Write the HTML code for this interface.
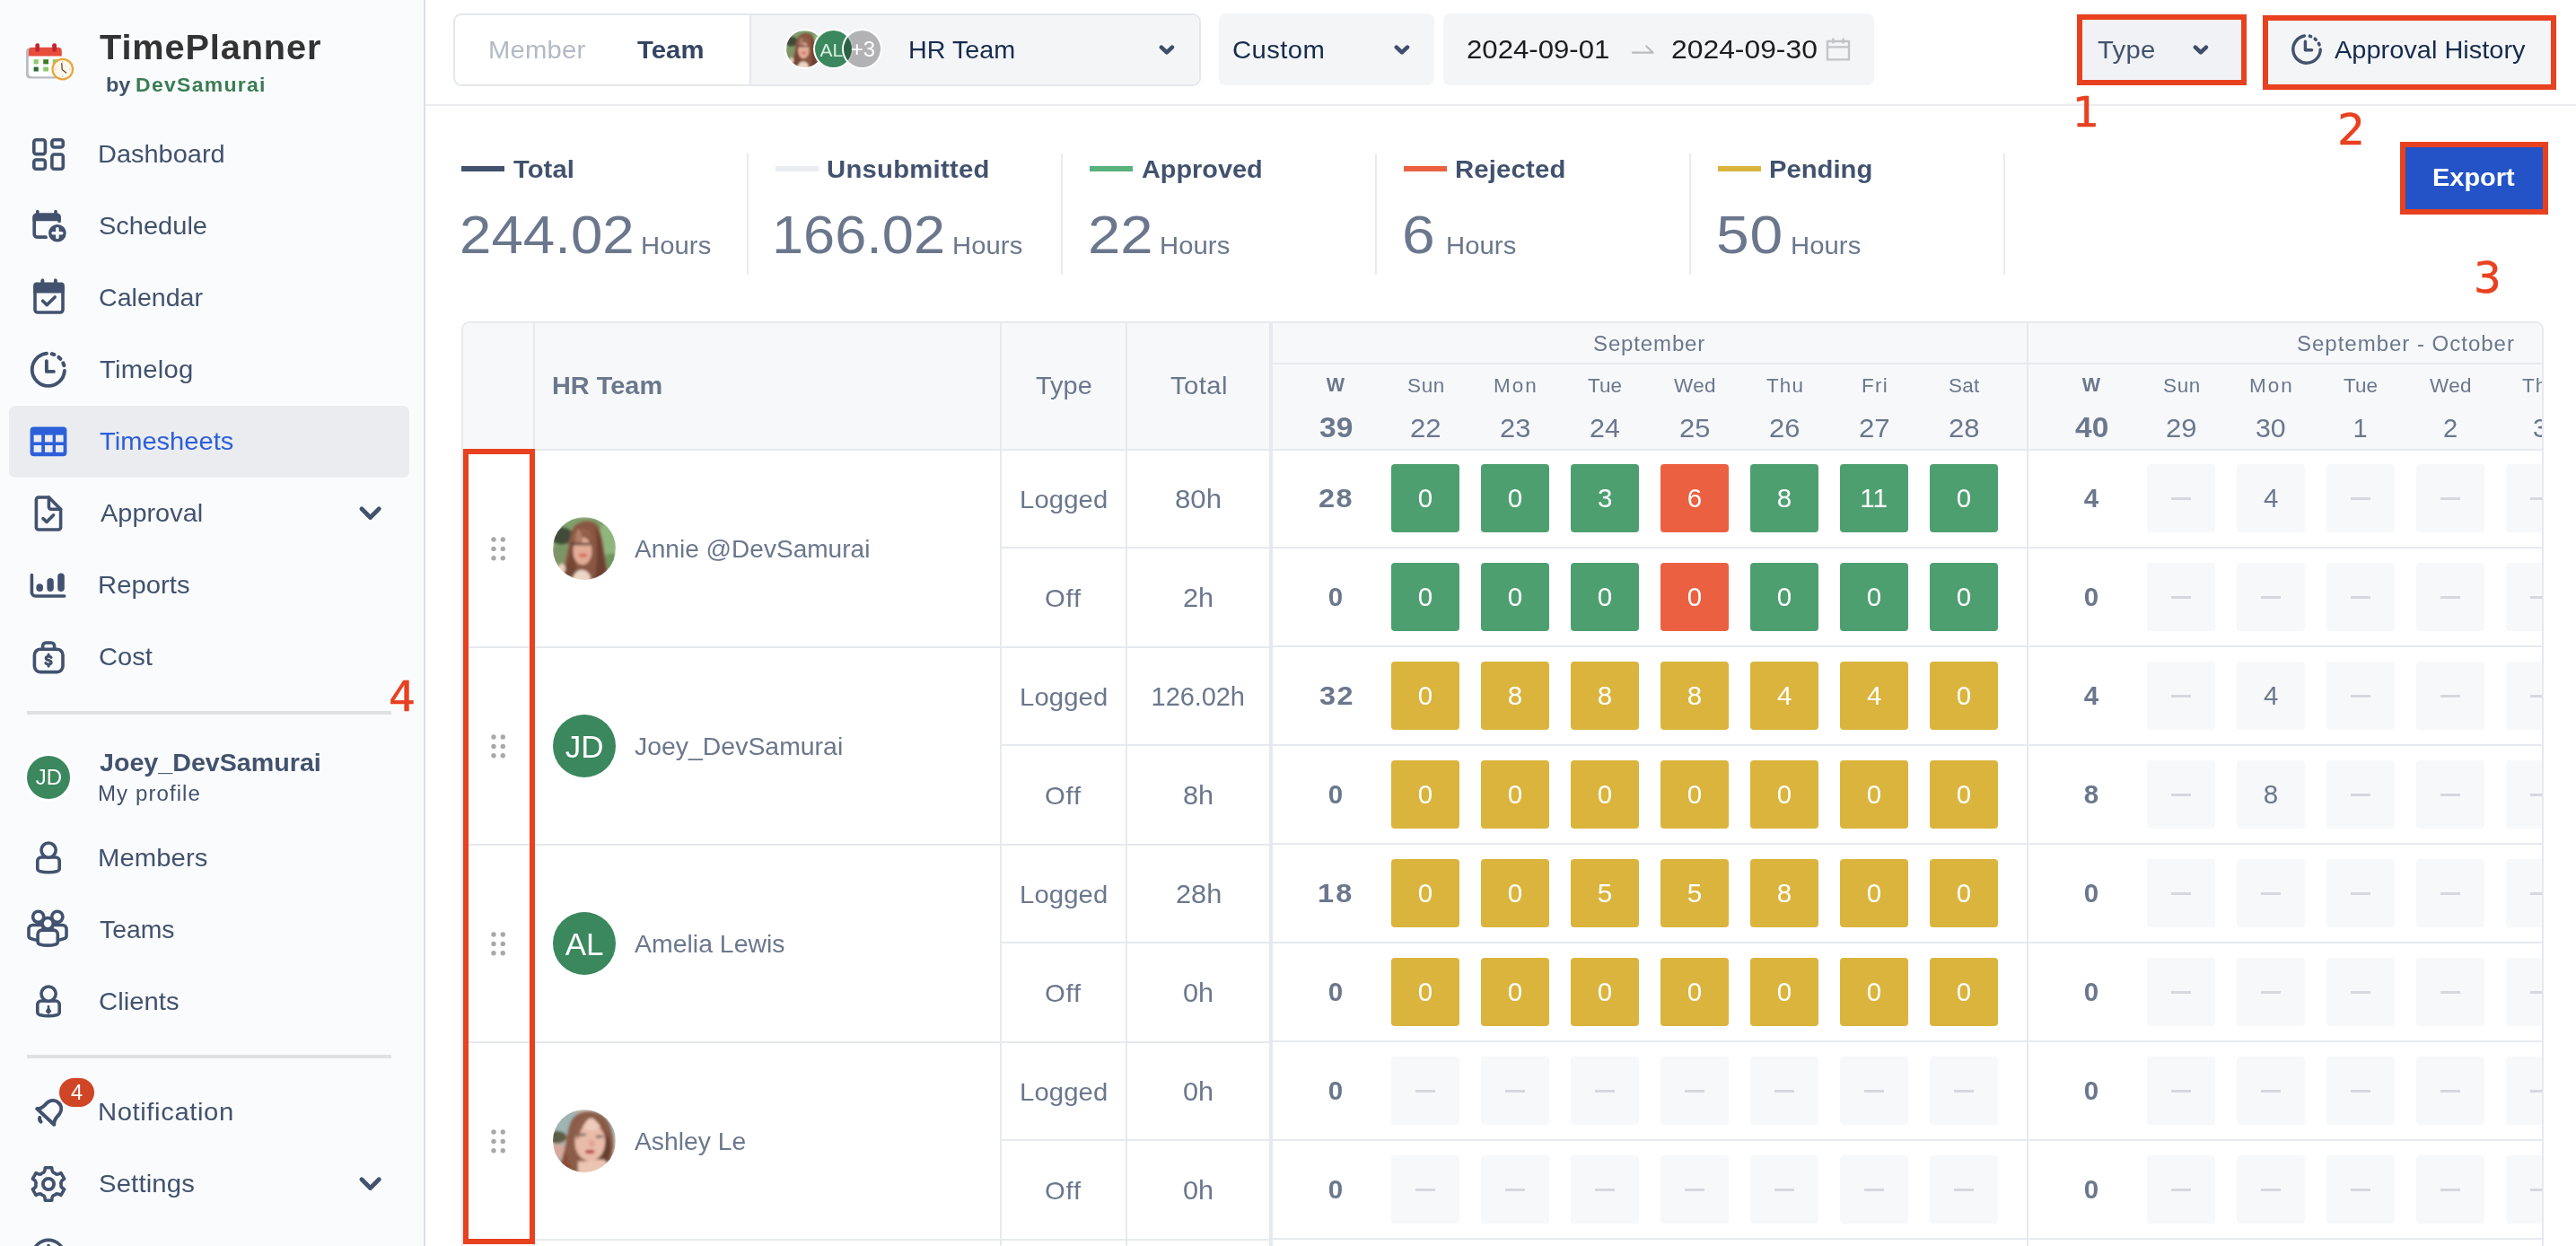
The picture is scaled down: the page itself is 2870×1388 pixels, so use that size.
<!DOCTYPE html>
<html lang="en"><head><meta charset="utf-8"><title>TimePlanner - Timesheets</title>
<style>
html,body{margin:0;padding:0;}
#root{position:absolute;left:0;top:0;width:2870px;height:1388px;overflow:hidden;will-change:transform;}
body{width:2870px;height:1388px;overflow:hidden;position:relative;background:#fff;font-family:"Liberation Sans",Arial,sans-serif;}
.b{position:absolute;box-sizing:border-box;}
.t{position:absolute;white-space:nowrap;line-height:1;transform-origin:0 50%;}
.tile{position:absolute;width:76px;height:76px;border-radius:4px;}
</style></head><body><div id="root">
<div class="b" style="left:0px;top:0px;width:474px;height:1388px;background:#fafbfc;border-right:2px solid #dcdfe4;"></div>
<div class="b" style="left:474px;top:116px;width:2396px;height:2px;background:#ebedf1;"></div>
<div class="b" style="left:10px;top:452px;width:446px;height:80px;background:#ebecf0;border-radius:7px;"></div>
<div class="t" style="left:110.6px;top:33.8px;font-size:38px;color:#333333;font-weight:700;letter-spacing:0.84px;transform:scaleX(1.045);">TimePlanner</div>
<div class="t" style="left:118.2px;top:84.2px;font-size:22px;color:#42526e;font-weight:700;transform:scaleX(1.067);">by</div>
<div class="t" style="left:150.5px;top:84.2px;font-size:22px;color:#3a7d54;font-weight:700;letter-spacing:1.23px;transform:scaleX(1.045);">DevSamurai</div>
<div class="t" style="left:109.2px;top:158.2px;font-size:28px;color:#42526e;transform:scaleX(1.034);">Dashboard</div>
<div class="t" style="left:110.2px;top:238.2px;font-size:28px;color:#42526e;transform:scaleX(1.036);">Schedule</div>
<div class="t" style="left:110.1px;top:318.2px;font-size:28px;color:#42526e;transform:scaleX(1.021);">Calendar</div>
<div class="t" style="left:110.9px;top:398.2px;font-size:28px;color:#42526e;letter-spacing:0.21px;transform:scaleX(1.045);">Timelog</div>
<div class="t" style="left:110.9px;top:478.2px;font-size:28px;color:#2c5fda;transform:scaleX(1.039);">Timesheets</div>
<div class="t" style="left:111.5px;top:558.2px;font-size:28px;color:#42526e;transform:scaleX(1.033);">Approval</div>
<div class="t" style="left:109.2px;top:638.2px;font-size:28px;color:#42526e;letter-spacing:0.02px;transform:scaleX(1.045);">Reports</div>
<div class="t" style="left:110.0px;top:718.2px;font-size:28px;color:#42526e;transform:scaleX(1.039);">Cost</div>
<div class="b" style="left:30px;top:792px;width:406px;height:4px;background:#dfe1e5;"></div>
<div class="t" style="left:110.6px;top:835.7px;font-size:28px;color:#42526e;font-weight:700;transform:scaleX(1.023);">Joey_DevSamurai</div>
<div class="t" style="left:109.1px;top:873.0px;font-size:23px;color:#42526e;letter-spacing:1.03px;transform:scaleX(1.045);">My profile</div>
<div class="t" style="left:109.2px;top:942.2px;font-size:28px;color:#42526e;letter-spacing:0.06px;transform:scaleX(1.045);">Members</div>
<div class="t" style="left:110.9px;top:1022.2px;font-size:28px;color:#42526e;transform:scaleX(1.013);">Teams</div>
<div class="t" style="left:110.0px;top:1102.2px;font-size:28px;color:#42526e;letter-spacing:0.02px;transform:scaleX(1.045);">Clients</div>
<div class="t" style="left:109.2px;top:1225.2px;font-size:28px;color:#42526e;letter-spacing:0.56px;transform:scaleX(1.045);">Notification</div>
<div class="t" style="left:110.2px;top:1305.2px;font-size:28px;color:#42526e;letter-spacing:0.15px;transform:scaleX(1.045);">Settings</div>
<div class="b" style="left:30px;top:1175px;width:406px;height:4px;background:#dfe1e5;"></div>
<div class="b" style="left:505px;top:15px;width:833px;height:81px;background:#ffffff;border:2px solid #e4e7ec;border-radius:9px;overflow:hidden;"><div class="b" style="left:328px;top:0;width:503px;height:77px;background:#f4f5f7;border-left:2px solid #e4e7ec;"></div></div>
<div class="t" style="left:544.2px;top:41.8px;font-size:28px;color:#b3bac5;letter-spacing:0.17px;transform:scaleX(1.045);">Member</div>
<div class="t" style="left:710.2px;top:41.8px;font-size:28px;color:#344563;font-weight:700;letter-spacing:0.07px;transform:scaleX(1.045);">Team</div>
<div class="t" style="left:1011.7px;top:41.8px;font-size:28px;color:#172b4d;transform:scaleX(1.026);">HR Team</div>
<div class="b" style="left:1358px;top:15px;width:240px;height:80px;background:#f4f5f7;border-radius:7px;"></div>
<div class="t" style="left:1372.5px;top:41.8px;font-size:28px;color:#172b4d;letter-spacing:0.40px;transform:scaleX(1.045);">Custom</div>
<div class="b" style="left:1608px;top:15px;width:480px;height:80px;background:#f4f5f7;border-radius:7px;"></div>
<div class="t" style="left:1634.0px;top:40.5px;font-size:29px;color:#1d1d1f;transform:scaleX(1.074);">2024-09-01</div>
<div class="t" style="left:1861.9px;top:40.5px;font-size:29px;color:#1d1d1f;transform:scaleX(1.098);">2024-09-30</div>
<div class="b" style="left:2313.5px;top:16px;width:189px;height:79px;background:#f1f2f5;border:6px solid #e8411f;"></div>
<div class="t" style="left:2337.4px;top:41.8px;font-size:28px;color:#42526e;letter-spacing:0.29px;transform:scaleX(1.045);">Type</div>
<div class="b" style="left:2521px;top:16.6px;width:326.5px;height:83.3px;background:#f4f5f7;border:6px solid #e8411f;"></div>
<div class="t" style="left:2601.0px;top:41.8px;font-size:28px;color:#172b4d;transform:scaleX(1.035);">Approval History</div>
<div class="b" style="left:2674.4px;top:158px;width:164.6px;height:81px;background:#2353c7;border:6px solid #e8411f;"></div>
<div class="t" style="left:2709.6px;top:183.8px;font-size:28px;color:#ffffff;font-weight:700;transform:scaleX(1.034);">Export</div>
<div class="t" style="left:2309.0px;top:101.2px;font-size:47px;color:#e8411f;font-family:'DejaVu Sans',sans-serif;-webkit-text-stroke:0.5px #e8411f;">1</div>
<div class="t" style="left:2604.3px;top:120.3px;font-size:48.3px;color:#e8411f;font-family:'DejaVu Sans',sans-serif;-webkit-text-stroke:0.5px #e8411f;">2</div>
<div class="t" style="left:2756.0px;top:284.6px;font-size:48.5px;color:#e8411f;font-family:'DejaVu Sans',sans-serif;-webkit-text-stroke:0.5px #e8411f;">3</div>
<div class="t" style="left:433.0px;top:752.2px;font-size:47px;color:#e8411f;font-family:'DejaVu Sans',sans-serif;-webkit-text-stroke:0.5px #e8411f;">4</div>
<div class="b" style="left:514px;top:185px;width:48px;height:6px;background:#42526e;"></div>
<div class="t" style="left:572.2px;top:174.8px;font-size:28px;color:#42526e;font-weight:700;letter-spacing:0.02px;transform:scaleX(1.045);">Total</div>
<div class="t" style="left:511.8px;top:232.1px;font-size:60px;color:#6b778c;transform:scaleX(1.061);">244.02</div>
<div class="t" style="left:714.2px;top:259.9px;font-size:28px;color:#6b778c;letter-spacing:0.06px;transform:scaleX(1.045);">Hours</div>
<div class="b" style="left:832px;top:171px;width:2px;height:135px;background:#e9ebef;"></div>
<div class="b" style="left:864px;top:185px;width:48px;height:6px;background:#e9ecf0;"></div>
<div class="t" style="left:920.7px;top:174.8px;font-size:28px;color:#42526e;font-weight:700;letter-spacing:0.25px;transform:scaleX(1.045);">Unsubmitted</div>
<div class="t" style="left:860.3px;top:232.1px;font-size:60px;color:#6b778c;transform:scaleX(1.052);">166.02</div>
<div class="t" style="left:1060.9px;top:259.9px;font-size:28px;color:#6b778c;letter-spacing:0.06px;transform:scaleX(1.045);">Hours</div>
<div class="b" style="left:1182px;top:171px;width:2px;height:135px;background:#e9ebef;"></div>
<div class="b" style="left:1214px;top:185px;width:48px;height:6px;background:#57b27c;"></div>
<div class="t" style="left:1271.8px;top:174.8px;font-size:28px;color:#42526e;font-weight:700;transform:scaleX(1.030);">Approved</div>
<div class="t" style="left:1211.7px;top:232.1px;font-size:60px;color:#6b778c;transform:scaleX(1.089);">22</div>
<div class="t" style="left:1291.7px;top:259.9px;font-size:28px;color:#6b778c;letter-spacing:0.06px;transform:scaleX(1.045);">Hours</div>
<div class="b" style="left:1532px;top:171px;width:2px;height:135px;background:#e9ebef;"></div>
<div class="b" style="left:1564px;top:185px;width:48px;height:6px;background:#eb6040;"></div>
<div class="t" style="left:1620.6px;top:174.8px;font-size:28px;color:#42526e;font-weight:700;letter-spacing:0.18px;transform:scaleX(1.045);">Rejected</div>
<div class="t" style="left:1561.7px;top:232.1px;font-size:60px;color:#6b778c;transform:scaleX(1.100);">6</div>
<div class="t" style="left:1610.7px;top:259.9px;font-size:28px;color:#6b778c;letter-spacing:0.06px;transform:scaleX(1.045);">Hours</div>
<div class="b" style="left:1882px;top:171px;width:2px;height:135px;background:#e9ebef;"></div>
<div class="b" style="left:1914px;top:185px;width:48px;height:6px;background:#dab43c;"></div>
<div class="t" style="left:1970.6px;top:174.8px;font-size:28px;color:#42526e;font-weight:700;transform:scaleX(1.044);">Pending</div>
<div class="t" style="left:1912.4px;top:232.1px;font-size:60px;color:#6b778c;letter-spacing:0.63px;transform:scaleX(1.100);">50</div>
<div class="t" style="left:1994.7px;top:259.9px;font-size:28px;color:#6b778c;letter-spacing:0.06px;transform:scaleX(1.045);">Hours</div>
<div class="b" style="left:2232px;top:171px;width:2px;height:135px;background:#e9ebef;"></div>
<div class="b" style="left:514px;top:358px;width:2320px;height:1040px;background:#ffffff;border:2px solid #e6e9ee;border-radius:9px 9px 0 0;overflow:hidden;"><div class="b" style="left:0;top:0;width:2320px;height:142px;background:#f7f8fa;"></div></div>
<div class="b" style="left:514px;top:500px;width:2320px;height:2px;background:#e6e9ee;"></div>
<div class="b" style="left:1115px;top:609px;width:1719px;height:2px;background:#e6e9ee;"></div>
<div class="b" style="left:514px;top:720px;width:902px;height:2px;background:#e6e9ee;"></div>
<div class="b" style="left:1416px;top:719px;width:1418px;height:2px;background:#e6e9ee;"></div>
<div class="b" style="left:1115px;top:829px;width:1719px;height:2px;background:#e6e9ee;"></div>
<div class="b" style="left:514px;top:940px;width:902px;height:2px;background:#e6e9ee;"></div>
<div class="b" style="left:1416px;top:939px;width:1418px;height:2px;background:#e6e9ee;"></div>
<div class="b" style="left:1115px;top:1049px;width:1719px;height:2px;background:#e6e9ee;"></div>
<div class="b" style="left:514px;top:1160px;width:902px;height:2px;background:#e6e9ee;"></div>
<div class="b" style="left:1416px;top:1159px;width:1418px;height:2px;background:#e6e9ee;"></div>
<div class="b" style="left:1115px;top:1269px;width:1719px;height:2px;background:#e6e9ee;"></div>
<div class="b" style="left:514px;top:1380px;width:902px;height:2px;background:#e6e9ee;"></div>
<div class="b" style="left:1416px;top:1379px;width:1418px;height:2px;background:#e6e9ee;"></div>
<div class="b" style="left:1416px;top:404px;width:1418px;height:2px;background:#e6e9ee;"></div>
<div class="b" style="left:594px;top:360px;width:2px;height:1028px;background:#e6e9ee;"></div>
<div class="b" style="left:1114px;top:360px;width:2px;height:1028px;background:#e6e9ee;"></div>
<div class="b" style="left:1254px;top:360px;width:2px;height:1028px;background:#e6e9ee;"></div>
<div class="b" style="left:1414px;top:360px;width:4px;height:1028px;background:#e6e9ee;"></div>
<div class="b" style="left:2258px;top:360px;width:2px;height:1028px;background:#e6e9ee;"></div>
<div class="t" style="left:614.6px;top:415.8px;font-size:28px;color:#6b778c;font-weight:700;transform:scaleX(1.032);">HR Team</div>
<div class="t" style="left:1153.9px;top:415.8px;font-size:28px;color:#6b778c;transform:scaleX(1.035);">Type</div>
<div class="t" style="left:1303.9px;top:415.8px;font-size:28px;color:#6b778c;letter-spacing:0.42px;transform:scaleX(1.045);">Total</div>
<div class="t" style="left:1774.9px;top:371.5px;font-size:23px;color:#6b778c;letter-spacing:0.81px;transform:scaleX(1.045);">September</div>
<div class="t" style="left:2558.7px;top:371.5px;font-size:23px;color:#6b778c;letter-spacing:0.93px;transform:scaleX(1.045);">September - October</div>
<div class="b" style="left:1417px;top:360px;width:1415px;height:1028px;overflow:hidden;">
<div class="t" style="left:60.8px;top:58.8px;font-size:21.5px;color:#6b778c;font-weight:700;">W</div>
<div class="t" style="left:52.6px;top:101.3px;font-size:31.5px;color:#6b778c;font-weight:700;transform:scaleX(1.065);">39</div>
<div class="t" style="left:150.5px;top:60.1px;font-size:21.5px;color:#6b778c;letter-spacing:0.65px;transform:scaleX(1.045);">Sun</div>
<div class="t" style="left:153.7px;top:103.3px;font-size:29px;color:#6b778c;transform:scaleX(1.075);">22</div>
<div class="t" style="left:247.0px;top:60.1px;font-size:21.5px;color:#6b778c;letter-spacing:1.89px;transform:scaleX(1.045);">Mon</div>
<div class="t" style="left:253.7px;top:103.3px;font-size:29px;color:#6b778c;transform:scaleX(1.065);">23</div>
<div class="t" style="left:352.3px;top:60.1px;font-size:21.5px;color:#6b778c;transform:scaleX(1.045);">Tue</div>
<div class="t" style="left:353.7px;top:103.3px;font-size:29px;color:#6b778c;transform:scaleX(1.049);">24</div>
<div class="t" style="left:448.4px;top:60.1px;font-size:21.5px;color:#6b778c;letter-spacing:0.35px;transform:scaleX(1.045);">Wed</div>
<div class="t" style="left:453.7px;top:103.3px;font-size:29px;color:#6b778c;transform:scaleX(1.065);">25</div>
<div class="t" style="left:551.1px;top:60.1px;font-size:21.5px;color:#6b778c;letter-spacing:1.08px;transform:scaleX(1.045);">Thu</div>
<div class="t" style="left:553.7px;top:103.3px;font-size:29px;color:#6b778c;transform:scaleX(1.065);">26</div>
<div class="t" style="left:656.5px;top:60.1px;font-size:21.5px;color:#6b778c;letter-spacing:1.24px;transform:scaleX(1.045);">Fri</div>
<div class="t" style="left:653.7px;top:103.3px;font-size:29px;color:#6b778c;transform:scaleX(1.075);">27</div>
<div class="t" style="left:753.5px;top:60.1px;font-size:21.5px;color:#6b778c;letter-spacing:0.20px;transform:scaleX(1.045);">Sat</div>
<div class="t" style="left:753.7px;top:103.3px;font-size:29px;color:#6b778c;transform:scaleX(1.065);">28</div>
<div class="t" style="left:902.8px;top:58.8px;font-size:21.5px;color:#6b778c;font-weight:700;">W</div>
<div class="t" style="left:894.8px;top:101.3px;font-size:31.5px;color:#6b778c;font-weight:700;transform:scaleX(1.065);">40</div>
<div class="t" style="left:992.5px;top:60.1px;font-size:21.5px;color:#6b778c;letter-spacing:0.65px;transform:scaleX(1.045);">Sun</div>
<div class="t" style="left:995.7px;top:103.3px;font-size:29px;color:#6b778c;transform:scaleX(1.070);">29</div>
<div class="t" style="left:1089.0px;top:60.1px;font-size:21.5px;color:#6b778c;letter-spacing:1.89px;transform:scaleX(1.045);">Mon</div>
<div class="t" style="left:1096.2px;top:103.3px;font-size:29px;color:#6b778c;transform:scaleX(1.044);">30</div>
<div class="t" style="left:1194.3px;top:60.1px;font-size:21.5px;color:#6b778c;transform:scaleX(1.045);">Tue</div>
<div class="t" style="left:1204.5px;top:103.3px;font-size:29px;color:#6b778c;">1</div>
<div class="t" style="left:1290.4px;top:60.1px;font-size:21.5px;color:#6b778c;letter-spacing:0.35px;transform:scaleX(1.045);">Wed</div>
<div class="t" style="left:1305.0px;top:103.3px;font-size:29px;color:#6b778c;">2</div>
<div class="t" style="left:1393.1px;top:60.1px;font-size:21.5px;color:#6b778c;letter-spacing:1.08px;transform:scaleX(1.045);">Thu</div>
<div class="t" style="left:1405.0px;top:103.3px;font-size:29px;color:#6b778c;">3</div>
<div class="t" style="left:52.2px;top:180.3px;font-size:29.5px;color:#6b778c;font-weight:700;letter-spacing:1.35px;transform:scaleX(1.100);">28</div>
<div class="tile" style="left:133px;top:157px;background:#4e9f70"></div>
<div class="t" style="left:162.7px;top:180.3px;font-size:29.5px;color:#ffffff;">0</div>
<div class="tile" style="left:233px;top:157px;background:#4e9f70"></div>
<div class="t" style="left:262.7px;top:180.3px;font-size:29.5px;color:#ffffff;">0</div>
<div class="tile" style="left:333px;top:157px;background:#4e9f70"></div>
<div class="t" style="left:362.9px;top:180.3px;font-size:29.5px;color:#ffffff;">3</div>
<div class="tile" style="left:433px;top:157px;background:#eb6040"></div>
<div class="t" style="left:462.7px;top:180.3px;font-size:29.5px;color:#ffffff;">6</div>
<div class="tile" style="left:533px;top:157px;background:#4e9f70"></div>
<div class="t" style="left:562.8px;top:180.3px;font-size:29.5px;color:#ffffff;">8</div>
<div class="tile" style="left:633px;top:157px;background:#4e9f70"></div>
<div class="t" style="left:655.3px;top:180.3px;font-size:29.5px;color:#ffffff;">11</div>
<div class="tile" style="left:733px;top:157px;background:#4e9f70"></div>
<div class="t" style="left:762.7px;top:180.3px;font-size:29.5px;color:#ffffff;">0</div>
<div class="t" style="left:904.7px;top:180.3px;font-size:29.5px;color:#6b778c;font-weight:700;">4</div>
<div class="tile" style="left:975px;top:157px;background:#f7f8fa"></div>
<div class="b" style="left:1002px;top:193.5px;width:22px;height:3px;background:#d5d8de"></div>
<div class="tile" style="left:1075px;top:157px;background:#f7f8fa"></div>
<div class="t" style="left:1104.9px;top:180.3px;font-size:29.5px;color:#6b778c;">4</div>
<div class="tile" style="left:1175px;top:157px;background:#f7f8fa"></div>
<div class="b" style="left:1202px;top:193.5px;width:22px;height:3px;background:#d5d8de"></div>
<div class="tile" style="left:1275px;top:157px;background:#f7f8fa"></div>
<div class="b" style="left:1302px;top:193.5px;width:22px;height:3px;background:#d5d8de"></div>
<div class="tile" style="left:1375px;top:157px;background:#f7f8fa"></div>
<div class="b" style="left:1402px;top:193.5px;width:22px;height:3px;background:#d5d8de"></div>
<div class="t" style="left:62.8px;top:290.3px;font-size:29.5px;color:#6b778c;font-weight:700;">0</div>
<div class="tile" style="left:133px;top:267px;background:#4e9f70"></div>
<div class="t" style="left:162.7px;top:290.3px;font-size:29.5px;color:#ffffff;">0</div>
<div class="tile" style="left:233px;top:267px;background:#4e9f70"></div>
<div class="t" style="left:262.7px;top:290.3px;font-size:29.5px;color:#ffffff;">0</div>
<div class="tile" style="left:333px;top:267px;background:#4e9f70"></div>
<div class="t" style="left:362.7px;top:290.3px;font-size:29.5px;color:#ffffff;">0</div>
<div class="tile" style="left:433px;top:267px;background:#eb6040"></div>
<div class="t" style="left:462.7px;top:290.3px;font-size:29.5px;color:#ffffff;">0</div>
<div class="tile" style="left:533px;top:267px;background:#4e9f70"></div>
<div class="t" style="left:562.7px;top:290.3px;font-size:29.5px;color:#ffffff;">0</div>
<div class="tile" style="left:633px;top:267px;background:#4e9f70"></div>
<div class="t" style="left:662.7px;top:290.3px;font-size:29.5px;color:#ffffff;">0</div>
<div class="tile" style="left:733px;top:267px;background:#4e9f70"></div>
<div class="t" style="left:762.7px;top:290.3px;font-size:29.5px;color:#ffffff;">0</div>
<div class="t" style="left:904.8px;top:290.3px;font-size:29.5px;color:#6b778c;font-weight:700;">0</div>
<div class="tile" style="left:975px;top:267px;background:#f7f8fa"></div>
<div class="b" style="left:1002px;top:303.5px;width:22px;height:3px;background:#d5d8de"></div>
<div class="tile" style="left:1075px;top:267px;background:#f7f8fa"></div>
<div class="b" style="left:1102px;top:303.5px;width:22px;height:3px;background:#d5d8de"></div>
<div class="tile" style="left:1175px;top:267px;background:#f7f8fa"></div>
<div class="b" style="left:1202px;top:303.5px;width:22px;height:3px;background:#d5d8de"></div>
<div class="tile" style="left:1275px;top:267px;background:#f7f8fa"></div>
<div class="b" style="left:1302px;top:303.5px;width:22px;height:3px;background:#d5d8de"></div>
<div class="tile" style="left:1375px;top:267px;background:#f7f8fa"></div>
<div class="b" style="left:1402px;top:303.5px;width:22px;height:3px;background:#d5d8de"></div>
<div class="t" style="left:52.7px;top:400.3px;font-size:29.5px;color:#6b778c;font-weight:700;letter-spacing:1.21px;transform:scaleX(1.100);">32</div>
<div class="tile" style="left:133px;top:377px;background:#dab43c"></div>
<div class="t" style="left:162.7px;top:400.3px;font-size:29.5px;color:#ffffff;">0</div>
<div class="tile" style="left:233px;top:377px;background:#dab43c"></div>
<div class="t" style="left:262.8px;top:400.3px;font-size:29.5px;color:#ffffff;">8</div>
<div class="tile" style="left:333px;top:377px;background:#dab43c"></div>
<div class="t" style="left:362.8px;top:400.3px;font-size:29.5px;color:#ffffff;">8</div>
<div class="tile" style="left:433px;top:377px;background:#dab43c"></div>
<div class="t" style="left:462.8px;top:400.3px;font-size:29.5px;color:#ffffff;">8</div>
<div class="tile" style="left:533px;top:377px;background:#dab43c"></div>
<div class="t" style="left:562.9px;top:400.3px;font-size:29.5px;color:#ffffff;">4</div>
<div class="tile" style="left:633px;top:377px;background:#dab43c"></div>
<div class="t" style="left:662.9px;top:400.3px;font-size:29.5px;color:#ffffff;">4</div>
<div class="tile" style="left:733px;top:377px;background:#dab43c"></div>
<div class="t" style="left:762.7px;top:400.3px;font-size:29.5px;color:#ffffff;">0</div>
<div class="t" style="left:904.7px;top:400.3px;font-size:29.5px;color:#6b778c;font-weight:700;">4</div>
<div class="tile" style="left:975px;top:377px;background:#f7f8fa"></div>
<div class="b" style="left:1002px;top:413.5px;width:22px;height:3px;background:#d5d8de"></div>
<div class="tile" style="left:1075px;top:377px;background:#f7f8fa"></div>
<div class="t" style="left:1104.9px;top:400.3px;font-size:29.5px;color:#6b778c;">4</div>
<div class="tile" style="left:1175px;top:377px;background:#f7f8fa"></div>
<div class="b" style="left:1202px;top:413.5px;width:22px;height:3px;background:#d5d8de"></div>
<div class="tile" style="left:1275px;top:377px;background:#f7f8fa"></div>
<div class="b" style="left:1302px;top:413.5px;width:22px;height:3px;background:#d5d8de"></div>
<div class="tile" style="left:1375px;top:377px;background:#f7f8fa"></div>
<div class="b" style="left:1402px;top:413.5px;width:22px;height:3px;background:#d5d8de"></div>
<div class="t" style="left:62.8px;top:510.3px;font-size:29.5px;color:#6b778c;font-weight:700;">0</div>
<div class="tile" style="left:133px;top:487px;background:#dab43c"></div>
<div class="t" style="left:162.7px;top:510.3px;font-size:29.5px;color:#ffffff;">0</div>
<div class="tile" style="left:233px;top:487px;background:#dab43c"></div>
<div class="t" style="left:262.7px;top:510.3px;font-size:29.5px;color:#ffffff;">0</div>
<div class="tile" style="left:333px;top:487px;background:#dab43c"></div>
<div class="t" style="left:362.7px;top:510.3px;font-size:29.5px;color:#ffffff;">0</div>
<div class="tile" style="left:433px;top:487px;background:#dab43c"></div>
<div class="t" style="left:462.7px;top:510.3px;font-size:29.5px;color:#ffffff;">0</div>
<div class="tile" style="left:533px;top:487px;background:#dab43c"></div>
<div class="t" style="left:562.7px;top:510.3px;font-size:29.5px;color:#ffffff;">0</div>
<div class="tile" style="left:633px;top:487px;background:#dab43c"></div>
<div class="t" style="left:662.7px;top:510.3px;font-size:29.5px;color:#ffffff;">0</div>
<div class="tile" style="left:733px;top:487px;background:#dab43c"></div>
<div class="t" style="left:762.7px;top:510.3px;font-size:29.5px;color:#ffffff;">0</div>
<div class="t" style="left:904.8px;top:510.3px;font-size:29.5px;color:#6b778c;font-weight:700;">8</div>
<div class="tile" style="left:975px;top:487px;background:#f7f8fa"></div>
<div class="b" style="left:1002px;top:523.5px;width:22px;height:3px;background:#d5d8de"></div>
<div class="tile" style="left:1075px;top:487px;background:#f7f8fa"></div>
<div class="t" style="left:1104.8px;top:510.3px;font-size:29.5px;color:#6b778c;">8</div>
<div class="tile" style="left:1175px;top:487px;background:#f7f8fa"></div>
<div class="b" style="left:1202px;top:523.5px;width:22px;height:3px;background:#d5d8de"></div>
<div class="tile" style="left:1275px;top:487px;background:#f7f8fa"></div>
<div class="b" style="left:1302px;top:523.5px;width:22px;height:3px;background:#d5d8de"></div>
<div class="tile" style="left:1375px;top:487px;background:#f7f8fa"></div>
<div class="b" style="left:1402px;top:523.5px;width:22px;height:3px;background:#d5d8de"></div>
<div class="t" style="left:51.4px;top:620.3px;font-size:29.5px;color:#6b778c;font-weight:700;letter-spacing:2.09px;transform:scaleX(1.100);">18</div>
<div class="tile" style="left:133px;top:597px;background:#dab43c"></div>
<div class="t" style="left:162.7px;top:620.3px;font-size:29.5px;color:#ffffff;">0</div>
<div class="tile" style="left:233px;top:597px;background:#dab43c"></div>
<div class="t" style="left:262.7px;top:620.3px;font-size:29.5px;color:#ffffff;">0</div>
<div class="tile" style="left:333px;top:597px;background:#dab43c"></div>
<div class="t" style="left:362.8px;top:620.3px;font-size:29.5px;color:#ffffff;">5</div>
<div class="tile" style="left:433px;top:597px;background:#dab43c"></div>
<div class="t" style="left:462.8px;top:620.3px;font-size:29.5px;color:#ffffff;">5</div>
<div class="tile" style="left:533px;top:597px;background:#dab43c"></div>
<div class="t" style="left:562.8px;top:620.3px;font-size:29.5px;color:#ffffff;">8</div>
<div class="tile" style="left:633px;top:597px;background:#dab43c"></div>
<div class="t" style="left:662.7px;top:620.3px;font-size:29.5px;color:#ffffff;">0</div>
<div class="tile" style="left:733px;top:597px;background:#dab43c"></div>
<div class="t" style="left:762.7px;top:620.3px;font-size:29.5px;color:#ffffff;">0</div>
<div class="t" style="left:904.8px;top:620.3px;font-size:29.5px;color:#6b778c;font-weight:700;">0</div>
<div class="tile" style="left:975px;top:597px;background:#f7f8fa"></div>
<div class="b" style="left:1002px;top:633.5px;width:22px;height:3px;background:#d5d8de"></div>
<div class="tile" style="left:1075px;top:597px;background:#f7f8fa"></div>
<div class="b" style="left:1102px;top:633.5px;width:22px;height:3px;background:#d5d8de"></div>
<div class="tile" style="left:1175px;top:597px;background:#f7f8fa"></div>
<div class="b" style="left:1202px;top:633.5px;width:22px;height:3px;background:#d5d8de"></div>
<div class="tile" style="left:1275px;top:597px;background:#f7f8fa"></div>
<div class="b" style="left:1302px;top:633.5px;width:22px;height:3px;background:#d5d8de"></div>
<div class="tile" style="left:1375px;top:597px;background:#f7f8fa"></div>
<div class="b" style="left:1402px;top:633.5px;width:22px;height:3px;background:#d5d8de"></div>
<div class="t" style="left:62.8px;top:730.3px;font-size:29.5px;color:#6b778c;font-weight:700;">0</div>
<div class="tile" style="left:133px;top:707px;background:#dab43c"></div>
<div class="t" style="left:162.7px;top:730.3px;font-size:29.5px;color:#ffffff;">0</div>
<div class="tile" style="left:233px;top:707px;background:#dab43c"></div>
<div class="t" style="left:262.7px;top:730.3px;font-size:29.5px;color:#ffffff;">0</div>
<div class="tile" style="left:333px;top:707px;background:#dab43c"></div>
<div class="t" style="left:362.7px;top:730.3px;font-size:29.5px;color:#ffffff;">0</div>
<div class="tile" style="left:433px;top:707px;background:#dab43c"></div>
<div class="t" style="left:462.7px;top:730.3px;font-size:29.5px;color:#ffffff;">0</div>
<div class="tile" style="left:533px;top:707px;background:#dab43c"></div>
<div class="t" style="left:562.7px;top:730.3px;font-size:29.5px;color:#ffffff;">0</div>
<div class="tile" style="left:633px;top:707px;background:#dab43c"></div>
<div class="t" style="left:662.7px;top:730.3px;font-size:29.5px;color:#ffffff;">0</div>
<div class="tile" style="left:733px;top:707px;background:#dab43c"></div>
<div class="t" style="left:762.7px;top:730.3px;font-size:29.5px;color:#ffffff;">0</div>
<div class="t" style="left:904.8px;top:730.3px;font-size:29.5px;color:#6b778c;font-weight:700;">0</div>
<div class="tile" style="left:975px;top:707px;background:#f7f8fa"></div>
<div class="b" style="left:1002px;top:743.5px;width:22px;height:3px;background:#d5d8de"></div>
<div class="tile" style="left:1075px;top:707px;background:#f7f8fa"></div>
<div class="b" style="left:1102px;top:743.5px;width:22px;height:3px;background:#d5d8de"></div>
<div class="tile" style="left:1175px;top:707px;background:#f7f8fa"></div>
<div class="b" style="left:1202px;top:743.5px;width:22px;height:3px;background:#d5d8de"></div>
<div class="tile" style="left:1275px;top:707px;background:#f7f8fa"></div>
<div class="b" style="left:1302px;top:743.5px;width:22px;height:3px;background:#d5d8de"></div>
<div class="tile" style="left:1375px;top:707px;background:#f7f8fa"></div>
<div class="b" style="left:1402px;top:743.5px;width:22px;height:3px;background:#d5d8de"></div>
<div class="t" style="left:62.8px;top:840.3px;font-size:29.5px;color:#6b778c;font-weight:700;">0</div>
<div class="tile" style="left:133px;top:817px;background:#f7f8fa"></div>
<div class="b" style="left:160px;top:853.5px;width:22px;height:3px;background:#d5d8de"></div>
<div class="tile" style="left:233px;top:817px;background:#f7f8fa"></div>
<div class="b" style="left:260px;top:853.5px;width:22px;height:3px;background:#d5d8de"></div>
<div class="tile" style="left:333px;top:817px;background:#f7f8fa"></div>
<div class="b" style="left:360px;top:853.5px;width:22px;height:3px;background:#d5d8de"></div>
<div class="tile" style="left:433px;top:817px;background:#f7f8fa"></div>
<div class="b" style="left:460px;top:853.5px;width:22px;height:3px;background:#d5d8de"></div>
<div class="tile" style="left:533px;top:817px;background:#f7f8fa"></div>
<div class="b" style="left:560px;top:853.5px;width:22px;height:3px;background:#d5d8de"></div>
<div class="tile" style="left:633px;top:817px;background:#f7f8fa"></div>
<div class="b" style="left:660px;top:853.5px;width:22px;height:3px;background:#d5d8de"></div>
<div class="tile" style="left:733px;top:817px;background:#f7f8fa"></div>
<div class="b" style="left:760px;top:853.5px;width:22px;height:3px;background:#d5d8de"></div>
<div class="t" style="left:904.8px;top:840.3px;font-size:29.5px;color:#6b778c;font-weight:700;">0</div>
<div class="tile" style="left:975px;top:817px;background:#f7f8fa"></div>
<div class="b" style="left:1002px;top:853.5px;width:22px;height:3px;background:#d5d8de"></div>
<div class="tile" style="left:1075px;top:817px;background:#f7f8fa"></div>
<div class="b" style="left:1102px;top:853.5px;width:22px;height:3px;background:#d5d8de"></div>
<div class="tile" style="left:1175px;top:817px;background:#f7f8fa"></div>
<div class="b" style="left:1202px;top:853.5px;width:22px;height:3px;background:#d5d8de"></div>
<div class="tile" style="left:1275px;top:817px;background:#f7f8fa"></div>
<div class="b" style="left:1302px;top:853.5px;width:22px;height:3px;background:#d5d8de"></div>
<div class="tile" style="left:1375px;top:817px;background:#f7f8fa"></div>
<div class="b" style="left:1402px;top:853.5px;width:22px;height:3px;background:#d5d8de"></div>
<div class="t" style="left:62.8px;top:950.3px;font-size:29.5px;color:#6b778c;font-weight:700;">0</div>
<div class="tile" style="left:133px;top:927px;background:#f7f8fa"></div>
<div class="b" style="left:160px;top:963.5px;width:22px;height:3px;background:#d5d8de"></div>
<div class="tile" style="left:233px;top:927px;background:#f7f8fa"></div>
<div class="b" style="left:260px;top:963.5px;width:22px;height:3px;background:#d5d8de"></div>
<div class="tile" style="left:333px;top:927px;background:#f7f8fa"></div>
<div class="b" style="left:360px;top:963.5px;width:22px;height:3px;background:#d5d8de"></div>
<div class="tile" style="left:433px;top:927px;background:#f7f8fa"></div>
<div class="b" style="left:460px;top:963.5px;width:22px;height:3px;background:#d5d8de"></div>
<div class="tile" style="left:533px;top:927px;background:#f7f8fa"></div>
<div class="b" style="left:560px;top:963.5px;width:22px;height:3px;background:#d5d8de"></div>
<div class="tile" style="left:633px;top:927px;background:#f7f8fa"></div>
<div class="b" style="left:660px;top:963.5px;width:22px;height:3px;background:#d5d8de"></div>
<div class="tile" style="left:733px;top:927px;background:#f7f8fa"></div>
<div class="b" style="left:760px;top:963.5px;width:22px;height:3px;background:#d5d8de"></div>
<div class="t" style="left:904.8px;top:950.3px;font-size:29.5px;color:#6b778c;font-weight:700;">0</div>
<div class="tile" style="left:975px;top:927px;background:#f7f8fa"></div>
<div class="b" style="left:1002px;top:963.5px;width:22px;height:3px;background:#d5d8de"></div>
<div class="tile" style="left:1075px;top:927px;background:#f7f8fa"></div>
<div class="b" style="left:1102px;top:963.5px;width:22px;height:3px;background:#d5d8de"></div>
<div class="tile" style="left:1175px;top:927px;background:#f7f8fa"></div>
<div class="b" style="left:1202px;top:963.5px;width:22px;height:3px;background:#d5d8de"></div>
<div class="tile" style="left:1275px;top:927px;background:#f7f8fa"></div>
<div class="b" style="left:1302px;top:963.5px;width:22px;height:3px;background:#d5d8de"></div>
<div class="tile" style="left:1375px;top:927px;background:#f7f8fa"></div>
<div class="b" style="left:1402px;top:963.5px;width:22px;height:3px;background:#d5d8de"></div>
</div>
<svg class="b" style="left:547.05px;top:597.6px;" width="17" height="27" viewBox="0 0 17 27" fill="none"><g fill="#a8a8a8"><circle cx="3" cy="3" r="2.7"/><circle cx="3" cy="13.4" r="2.7"/><circle cx="3" cy="23.8" r="2.7"/><circle cx="13.3" cy="3" r="2.7"/><circle cx="13.3" cy="13.4" r="2.7"/><circle cx="13.3" cy="23.8" r="2.7"/></g></svg>
<svg class="b" style="left:615.5px;top:576px;" width="70" height="70" viewBox="0 0 100 100" fill="none"><defs><clipPath id="avc1"><circle cx="50" cy="50" r="50"/></clipPath><filter id="avb1" x="-10%" y="-10%" width="120%" height="120%"><feGaussianBlur stdDeviation="2.2"/></filter></defs><g clip-path="url(#avc1)"><g filter="url(#avb1)">
<rect width="100" height="100" fill="#7f9f6c"/>
<ellipse cx="14" cy="30" rx="18" ry="14" fill="#3f4b38"/>
<ellipse cx="10" cy="62" rx="16" ry="16" fill="#7b9466"/>
<ellipse cx="88" cy="35" rx="16" ry="26" fill="#8fb77d"/>
<ellipse cx="92" cy="72" rx="12" ry="14" fill="#6f9660"/>
<path d="M30 22C34 6 62 0 72 14C80 30 82 60 88 92L60 104L14 92C22 70 24 40 30 22z" fill="#8a5643"/>
<path d="M68 14C78 30 80 60 86 92L66 100C72 70 70 36 68 14z" fill="#6e4032"/>
<path d="M30 40C26 60 24 80 16 90L40 98C36 76 34 56 30 40z" fill="#744636"/>
<ellipse cx="47" cy="54" rx="15" ry="22" fill="#e2ac96"/>
<path d="M28 40C34 14 58 10 64 36C56 30 40 32 28 40z" fill="#93604b"/>
<path d="M40 18C46 24 48 34 46 42L36 42C36 32 36 24 40 18z" fill="#b07d66"/>
<rect x="28" y="41" width="32" height="3.6" rx="1.5" fill="#5a3d35"/>
<ellipse cx="48" cy="61" rx="7" ry="3" fill="#d4705f"/>
<ellipse cx="46" cy="98" rx="14" ry="14" fill="#ecd6c8"/>
<ellipse cx="14" cy="82" rx="6" ry="8" fill="#e9d3c0"/>
</g></g></svg>
<div class="t" style="left:707.0px;top:597.5px;font-size:28px;color:#6b778c;transform:scaleX(1.002);">Annie @DevSamurai</div>
<div class="t" style="left:1135.7px;top:542.5px;font-size:28px;color:#6b778c;letter-spacing:0.10px;transform:scaleX(1.045);">Logged</div>
<div class="t" style="left:1164.2px;top:652.5px;font-size:28px;color:#6b778c;letter-spacing:0.81px;transform:scaleX(1.045);">Off</div>
<div class="t" style="left:1309.3px;top:541.7px;font-size:29px;color:#6b778c;transform:scaleX(1.077);">80h</div>
<div class="t" style="left:1318.1px;top:651.7px;font-size:29px;color:#6b778c;transform:scaleX(1.059);">2h</div>
<svg class="b" style="left:547.05px;top:817.6px;" width="17" height="27" viewBox="0 0 17 27" fill="none"><g fill="#a8a8a8"><circle cx="3" cy="3" r="2.7"/><circle cx="3" cy="13.4" r="2.7"/><circle cx="3" cy="23.8" r="2.7"/><circle cx="13.3" cy="3" r="2.7"/><circle cx="13.3" cy="13.4" r="2.7"/><circle cx="13.3" cy="23.8" r="2.7"/></g></svg>
<div class="b" style="left:615.5px;top:796px;width:70px;height:70px;background:#3b875e;border-radius:50%;"></div>
<div class="t" style="left:629.7px;top:814.0px;font-size:35px;color:#ffffff;">JD</div>
<div class="t" style="left:706.6px;top:817.5px;font-size:28px;color:#6b778c;transform:scaleX(1.015);">Joey_DevSamurai</div>
<div class="t" style="left:1135.7px;top:762.5px;font-size:28px;color:#6b778c;letter-spacing:0.10px;transform:scaleX(1.045);">Logged</div>
<div class="t" style="left:1164.2px;top:872.5px;font-size:28px;color:#6b778c;letter-spacing:0.81px;transform:scaleX(1.045);">Off</div>
<div class="t" style="left:1282.6px;top:761.7px;font-size:29px;color:#6b778c;letter-spacing:-0.09px;">126.02h</div>
<div class="t" style="left:1318.3px;top:871.7px;font-size:29px;color:#6b778c;transform:scaleX(1.058);">8h</div>
<svg class="b" style="left:547.05px;top:1037.6px;" width="17" height="27" viewBox="0 0 17 27" fill="none"><g fill="#a8a8a8"><circle cx="3" cy="3" r="2.7"/><circle cx="3" cy="13.4" r="2.7"/><circle cx="3" cy="23.8" r="2.7"/><circle cx="13.3" cy="3" r="2.7"/><circle cx="13.3" cy="13.4" r="2.7"/><circle cx="13.3" cy="23.8" r="2.7"/></g></svg>
<div class="b" style="left:615.5px;top:1016px;width:70px;height:70px;background:#3b875e;border-radius:50%;"></div>
<div class="t" style="left:629.7px;top:1034.0px;font-size:35px;color:#ffffff;">AL</div>
<div class="t" style="left:707.0px;top:1037.5px;font-size:28px;color:#6b778c;transform:scaleX(1.016);">Amelia Lewis</div>
<div class="t" style="left:1135.7px;top:982.5px;font-size:28px;color:#6b778c;letter-spacing:0.10px;transform:scaleX(1.045);">Logged</div>
<div class="t" style="left:1164.2px;top:1092.5px;font-size:28px;color:#6b778c;letter-spacing:0.81px;transform:scaleX(1.045);">Off</div>
<div class="t" style="left:1309.6px;top:981.7px;font-size:29px;color:#6b778c;transform:scaleX(1.060);">28h</div>
<div class="t" style="left:1318.3px;top:1091.7px;font-size:29px;color:#6b778c;transform:scaleX(1.058);">0h</div>
<svg class="b" style="left:547.05px;top:1257.6px;" width="17" height="27" viewBox="0 0 17 27" fill="none"><g fill="#a8a8a8"><circle cx="3" cy="3" r="2.7"/><circle cx="3" cy="13.4" r="2.7"/><circle cx="3" cy="23.8" r="2.7"/><circle cx="13.3" cy="3" r="2.7"/><circle cx="13.3" cy="13.4" r="2.7"/><circle cx="13.3" cy="23.8" r="2.7"/></g></svg>
<svg class="b" style="left:615.5px;top:1236px;" width="70" height="70" viewBox="0 0 100 100" fill="none"><defs><clipPath id="avc2"><circle cx="50" cy="50" r="50"/></clipPath><filter id="avb2" x="-10%" y="-10%" width="120%" height="120%"><feGaussianBlur stdDeviation="2.2"/></filter></defs><g clip-path="url(#avc2)"><g filter="url(#avb2)">
<rect width="100" height="100" fill="#b9b3a6"/>
<ellipse cx="14" cy="18" rx="26" ry="22" fill="#9eb5b3"/>
<ellipse cx="6" cy="44" rx="16" ry="10" fill="#5e5c44"/>
<ellipse cx="8" cy="66" rx="14" ry="10" fill="#d8a99f"/>
<ellipse cx="98" cy="30" rx="8" ry="14" fill="#a9bdb9"/>
<ellipse cx="96" cy="70" rx="8" ry="8" fill="#e2b9ad"/>
<path d="M28 20C36 0 70 -4 86 16C98 34 100 60 92 84L70 80L44 104L10 88C22 66 20 40 28 20z" fill="#8b5d4a"/>
<path d="M20 62C22 80 30 96 44 104L12 90C16 80 18 70 20 62z" fill="#8c4d38"/>
<path d="M84 30C94 48 94 70 86 84L72 80C82 66 86 48 84 30z" fill="#65402f"/>
<ellipse cx="59" cy="52" rx="24" ry="30" fill="#e9bba9"/>
<ellipse cx="62" cy="24" rx="14" ry="10" fill="#efcbbb"/>
<path d="M36 40C40 14 50 8 60 12C50 20 44 32 40 48z" fill="#8f604c"/>
<path d="M62 12C76 12 86 24 88 46C82 34 74 22 62 12z" fill="#85563f"/>
<ellipse cx="47" cy="40" rx="6" ry="2.2" fill="#7d6a5f"/>
<ellipse cx="74" cy="43" rx="6" ry="2.2" fill="#7d6a5f"/>
<ellipse cx="62" cy="54" rx="5" ry="6" fill="#e2a595"/>
<ellipse cx="59" cy="67" rx="8" ry="3.2" fill="#b8474a"/>
<path d="M40 82C52 84 70 78 82 80L90 90L60 106L40 100z" fill="#ebc4b3"/>
</g></g></svg>
<div class="t" style="left:707.0px;top:1257.5px;font-size:28px;color:#6b778c;transform:scaleX(1.010);">Ashley Le</div>
<div class="t" style="left:1135.7px;top:1202.5px;font-size:28px;color:#6b778c;letter-spacing:0.10px;transform:scaleX(1.045);">Logged</div>
<div class="t" style="left:1164.2px;top:1312.5px;font-size:28px;color:#6b778c;letter-spacing:0.81px;transform:scaleX(1.045);">Off</div>
<div class="t" style="left:1318.3px;top:1201.7px;font-size:29px;color:#6b778c;transform:scaleX(1.058);">0h</div>
<div class="t" style="left:1318.3px;top:1311.7px;font-size:29px;color:#6b778c;transform:scaleX(1.058);">0h</div>
<svg class="b" style="left:26px;top:44px;" width="62" height="50" viewBox="0 0 62 50" fill="none">
    <rect x="3" y="9" width="39" height="34.5" rx="4.5" fill="#b9bcc0"/>
    <rect x="5.8" y="8.6" width="37" height="32.6" rx="4" fill="#ffffff"/>
    <path d="M5.8 18.6V12.8a4 4 0 0 1 4-4H38.8a4 4 0 0 1 4 4v5.8z" fill="#e84c3d"/>
    <rect x="13.4" y="4.2" width="4.6" height="9.6" rx="2" fill="#c1272d"/>
    <rect x="32.2" y="4.2" width="4.8" height="9.6" rx="2" fill="#c1272d"/>
    <rect x="11.6" y="22.2" width="5.2" height="5.2" fill="#8ccb6b"/>
    <rect x="22.2" y="22.2" width="5.8" height="5.2" fill="#3a7d22"/>
    <rect x="32.7" y="22.2" width="5.2" height="5.2" fill="#8ccb6b"/>
    <rect x="11.6" y="30.6" width="5.2" height="4.9" fill="#2b6e33"/>
    <rect x="22.2" y="30.6" width="5.8" height="4.9" fill="#8ccb6b"/>
    <circle cx="43.8" cy="33.1" r="11.3" fill="#fdf8ee" stroke="#e9a63c" stroke-width="2.2"/>
    <path d="M42.8 26.6L43.2 33.4L47.6 37" stroke="#6b4a2f" stroke-width="1.3" stroke-linecap="round" stroke-linejoin="round"/>
    <g stroke="#c9b89a" stroke-width="1"><path d="M43.8 24.3v1.6M43.8 40.3v1.6M35 33.1h1.6M51 33.1h1.6"/></g>
    </svg>
<svg class="b" style="left:30px;top:148px;" width="48" height="48" viewBox="0 0 48 48" fill="none"><g stroke="#42526e" stroke-width="3.6" stroke-linecap="round" stroke-linejoin="round"><rect x="7.8" y="7.8" width="12.6" height="15.8" rx="2.5"/><rect x="27.9" y="7.8" width="12.4" height="8.2" rx="2.5"/><rect x="7.8" y="30" width="12.6" height="10.2" rx="2.5"/><rect x="27.9" y="24" width="12.4" height="16.2" rx="2.5"/></g></svg>
<svg class="b" style="left:30px;top:228px;" width="48" height="48" viewBox="0 0 48 48" fill="none"><g stroke="#42526e" stroke-width="3.6" stroke-linecap="round" stroke-linejoin="round"><path d="M21.8 36.1H11.2a3 3 0 0 1-3-3V14a3 3 0 0 1 3-3H33a3 3 0 0 1 3 3V19"/><path d="M11.8 7.6v3.4M32 7.6v3.4"/></g>
    <path d="M6.4 14a3.6 3.6 0 0 1 3.6-3.6H34.2a3.6 3.6 0 0 1 3.6 3.6V18.2H6.4z" fill="#42526e"/>
    <circle cx="33.9" cy="31.7" r="12" fill="#fafbfc"/>
    <circle cx="33.9" cy="31.7" r="9.8" fill="#42526e"/>
    <path d="M33.9 26.9v9.6M29.1 31.7h9.6" stroke="#fafbfc" stroke-width="3.6" stroke-linecap="round"/></svg>
<svg class="b" style="left:29.6px;top:308px;" width="48" height="48" viewBox="0 0 48 48" fill="none"><g stroke="#42526e" stroke-width="3.6" stroke-linecap="round" stroke-linejoin="round"><rect x="9" y="9" width="31" height="31" rx="3"/><path d="M17.4 4.4v5M31.8 4.4v5"/><path d="M17.6 27.2l4.6 4.4l9-8.6"/></g>
    <path d="M7.2 10a3.6 3.6 0 0 1 3.6-3.6H38.2a3.6 3.6 0 0 1 3.6 3.6v8.6H7.2z" fill="#42526e"/>
    <path d="M17.4 4.4v4M31.8 4.4v4" stroke="#42526e" stroke-width="3.6" stroke-linecap="round"/></svg>
<svg class="b" style="left:30px;top:388px;" width="48" height="48" viewBox="0 0 48 48" fill="none"><g stroke="#42526e" stroke-width="3.9" stroke-linecap="round" stroke-linejoin="round"><path d="M21.96 5.8A18.1 18.1 0 1 0 41.9 25.06"/><path d="M21.9 14.1v11.8h8"/>
    <path d="M27.92 6.17L30.33 6.9M35.48 9.93L37.3 11.69M40.39 16.44L41.33 19.12" stroke-width="4.2"/></g></svg>
<svg class="b" style="left:30px;top:468px;" width="48" height="48" viewBox="0 0 48 48" fill="none"><rect x="3.6" y="7.6" width="40.8" height="32.6" rx="4" fill="#2c5fda"/>
    <g fill="#ebecf0"><rect x="7.6" y="16.6" width="8.6" height="7.8"/><rect x="20" y="16.6" width="8.6" height="7.8"/><rect x="32" y="16.6" width="8.6" height="7.8"/>
    <rect x="7.6" y="28" width="8.6" height="7.8"/><rect x="20" y="28" width="8.6" height="7.8"/><rect x="32" y="28" width="8.6" height="7.8"/></g></svg>
<svg class="b" style="left:30px;top:548px;" width="48" height="48" viewBox="0 0 48 48" fill="none"><g stroke="#42526e" stroke-width="3.6" stroke-linecap="round" stroke-linejoin="round"><path d="M24.4 6H13a2.6 2.6 0 0 0-2.6 2.6V39.4A2.6 2.6 0 0 0 13 42H35a2.6 2.6 0 0 0 2.6-2.6V19.2z"/><path d="M24.4 6v10.6a2.6 2.6 0 0 0 2.6 2.6h10.6"/><path d="M18 29.6l4 3.8l7.6-7.6"/></g></svg>
<svg class="b" style="left:30px;top:628px;" width="48" height="48" viewBox="0 0 48 48" fill="none"><g stroke="#42526e" stroke-width="3.6" stroke-linecap="round" stroke-linejoin="round"><path d="M5.4 12.5V32a4 4 0 0 0 4 4H41.7"/></g>
    <g fill="#42526e"><rect x="10.4" y="22.2" width="7.6" height="8.8" rx="3.8"/><rect x="22.4" y="16" width="7.4" height="15" rx="3.7"/><rect x="34.2" y="10.4" width="7.6" height="20.6" rx="3.8"/></g></svg>
<svg class="b" style="left:30px;top:708px;" width="48" height="48" viewBox="0 0 48 48" fill="none"><g stroke="#42526e" stroke-width="3.6" stroke-linecap="round" stroke-linejoin="round"><rect x="8.4" y="15.2" width="31.6" height="25.4" rx="6.5"/><path d="M17.6 14.6v-3.2a3.4 3.4 0 0 1 3.4-3.4h6.2a3.4 3.4 0 0 1 3.4 3.4v3.2"/></g>
    <g stroke="#42526e" stroke-width="3.1" stroke-linecap="round" fill="none"><path d="M27 24.4c-.6-1.4-5.8-1.8-5.8 .9c0 2.9 5.9 1.6 5.9 4.7c0 2.7-5.4 2.4-6.2 .7"/><path d="M24.1 21v1.8M24.1 32.2v1.9"/></g></svg>
<div class="b" style="left:30px;top:842px;width:48px;height:48px;background:#3b875e;border-radius:50%;box-shadow:0 0 0 3px #fff;"></div>
<div class="t" style="left:39.7px;top:854.3px;font-size:24px;color:#ffffff;">JD</div>
<svg class="b" style="left:30px;top:932px;" width="48" height="48" viewBox="0 0 48 48" fill="none"><g stroke="#42526e" stroke-width="3.6" stroke-linecap="round" stroke-linejoin="round"><path d="M15.8 23H32.2a4 4 0 0 1 4 4V35.6c0 1.5-.9 2.4-2.2 2.8c-6.6 1.8-13.4 1.8-20 0c-1.3-.4-2.2-1.3-2.2-2.8V27a4 4 0 0 1 4-4z"/><circle cx="24.1" cy="15.1" r="8.1" fill="#fafbfc"/></g></svg>
<svg class="b" style="left:30px;top:1092px;" width="48" height="48" viewBox="0 0 48 48" fill="none"><g stroke="#42526e" stroke-width="3.6" stroke-linecap="round" stroke-linejoin="round"><path d="M15.8 23H32.2a4 4 0 0 1 4 4V35.6c0 1.5-.9 2.4-2.2 2.8c-6.6 1.8-13.4 1.8-20 0c-1.3-.4-2.2-1.3-2.2-2.8V27a4 4 0 0 1 4-4z"/><circle cx="24.1" cy="15.1" r="8.1" fill="#fafbfc"/></g><path d="M24 27.2l1.7 2.2l-.7 1l2.3 4.4l-3.3 3.2l-3.3-3.2l2.3-4.4l-.7-1z" fill="#42526e"/></svg>
<svg class="b" style="left:29px;top:1011px;" width="48" height="48" viewBox="0 0 48 48" fill="none"><g stroke="#42526e" stroke-width="3.6" stroke-linecap="round" stroke-linejoin="round" fill="#fafbfc">
    <path d="M7.5 19.5H19v16.6H12c-1 0-2-.2-3-.5l-3.600000000000001-1c-1.5-.5-2.4-1.5-2.4-3.100000000000001V24a4.5 4.5 0 0 1 4.5-4.5z"/>
    <path d="M40.6 19.5H29v16.6H36c1 0 2-.2 3-.5l3.600000000000001-1c1.5-.5 2.4-1.5 2.4-3.100000000000001V24a4.5 4.5 0 0 0-4.5-4.5z"/>
    <circle cx="13.7" cy="10.3" r="6.1"/><circle cx="34.8" cy="10.3" r="6.1"/>
    <path d="M17.6 25.1H30.8a4.5 4.5 0 0 1 4.5 4.5V38c0 1.5-.9 2.5-2.300000000000001 2.9c-5.6 1.6-12 1.6-17.6 0c-1.4-.4-2.300000000000001-1.4-2.300000000000001-2.9V29.6a4.5 4.5 0 0 1 4.5-4.5z"/>
    <circle cx="24.2" cy="17.6" r="6.1"/>
    </g></svg>
<svg class="b" style="left:31.6px;top:1214.2px;" width="48" height="48" viewBox="0 0 48 48" fill="none"><g transform="rotate(43 24 24) translate(24 24) scale(1.12) translate(-24 -24.5)" stroke="#42526e" stroke-width="3.6" stroke-linecap="round" stroke-linejoin="round"><path d="M12.6 31.6c2.4-2.2 3.2-4.6 3.2-8.6c0-6.4 3.4-10.4 8.4-10.4s8.4 4 8.4 10.400000000000001c0 4 .8 6.4 3.2 8.6z"/><path d="M20.6 36.2c.8 1.6 2 2.2 3.6 2.2"/></g></svg>
<div class="b" style="left:66px;top:1201px;width:39px;height:32px;background:#d04526;border-radius:16px;"></div>
<div class="t" style="left:79.1px;top:1206.1px;font-size:23.5px;color:#ffffff;">4</div>
<svg class="b" style="left:30px;top:1295px;" width="48" height="48" viewBox="0 0 48 48" fill="none"><g stroke="#42526e" stroke-width="3.6" stroke-linecap="round" stroke-linejoin="round"><path d="M20.29 5.77L27.71 5.77Q27.80 11.57 31.10 11.70Q32.87 14.49 37.93 11.68L41.64 18.10Q36.67 21.08 38.20 24.00Q36.67 26.92 41.64 29.90L37.93 36.32Q32.87 33.51 31.10 36.30Q27.80 36.43 27.71 42.23L20.29 42.23Q20.20 36.43 16.90 36.30Q15.13 33.51 10.07 36.32L6.36 29.90Q11.33 26.92 9.80 24.00Q11.33 21.08 6.36 18.10L10.07 11.68Q15.13 14.49 16.90 11.70Q20.20 11.57 20.29 5.77Z"/><circle cx="24" cy="24" r="6.1" stroke-width="3.8"/></g></svg>
<svg class="b" style="left:30px;top:1375px;" width="48" height="48" viewBox="0 0 48 48" fill="none"><g stroke="#42526e" stroke-width="3.6" stroke-linecap="round" stroke-linejoin="round"><circle cx="24" cy="24" r="17.6"/><path d="M24 12.6v1"/></g></svg>
<svg class="b" style="left:1287.3px;top:45.65px;" width="25.8" height="19.9" viewBox="0 0 25.8 19.9" fill="none"><path d="M6.84 6.67L12.90 12.43L18.96 6.67" stroke="#3f4d6b" stroke-width="4.6" stroke-linecap="round" stroke-linejoin="round"/></svg>
<svg class="b" style="left:1549.1px;top:46.15px;" width="25.8" height="19.9" viewBox="0 0 25.8 19.9" fill="none"><path d="M6.84 6.67L12.90 12.43L18.96 6.67" stroke="#3f4d6b" stroke-width="4.6" stroke-linecap="round" stroke-linejoin="round"/></svg>
<svg class="b" style="left:2438.9px;top:46.05px;" width="25.8" height="19.9" viewBox="0 0 25.8 19.9" fill="none"><path d="M6.84 6.67L12.90 12.43L18.96 6.67" stroke="#3f4d6b" stroke-width="4.6" stroke-linecap="round" stroke-linejoin="round"/></svg>
<svg class="b" style="left:395.7px;top:559.8px;" width="33.2" height="24" viewBox="0 0 33.2 24" fill="none"><path d="M6.92 6.76L16.60 16.44L26.28 6.76" stroke="#42526e" stroke-width="4.8" stroke-linecap="round" stroke-linejoin="round"/></svg>
<svg class="b" style="left:395.7px;top:1307.3px;" width="33.2" height="24" viewBox="0 0 33.2 24" fill="none"><path d="M6.92 6.76L16.60 16.44L26.28 6.76" stroke="#42526e" stroke-width="4.8" stroke-linecap="round" stroke-linejoin="round"/></svg>
<div class="b" style="left:873.8px;top:32.3px;width:45px;height:45px;background:#ffffff;border-radius:50%;"></div>
<svg class="b" style="left:875.8px;top:34.3px;" width="41" height="41" viewBox="0 0 100 100" fill="none"><defs><clipPath id="avc3"><circle cx="50" cy="50" r="50"/></clipPath><filter id="avb3" x="-10%" y="-10%" width="120%" height="120%"><feGaussianBlur stdDeviation="2.2"/></filter></defs><g clip-path="url(#avc3)"><g filter="url(#avb3)">
<rect width="100" height="100" fill="#7f9f6c"/>
<ellipse cx="14" cy="30" rx="18" ry="14" fill="#3f4b38"/>
<ellipse cx="10" cy="62" rx="16" ry="16" fill="#7b9466"/>
<ellipse cx="88" cy="35" rx="16" ry="26" fill="#8fb77d"/>
<ellipse cx="92" cy="72" rx="12" ry="14" fill="#6f9660"/>
<path d="M30 22C34 6 62 0 72 14C80 30 82 60 88 92L60 104L14 92C22 70 24 40 30 22z" fill="#8a5643"/>
<path d="M68 14C78 30 80 60 86 92L66 100C72 70 70 36 68 14z" fill="#6e4032"/>
<path d="M30 40C26 60 24 80 16 90L40 98C36 76 34 56 30 40z" fill="#744636"/>
<ellipse cx="47" cy="54" rx="15" ry="22" fill="#e2ac96"/>
<path d="M28 40C34 14 58 10 64 36C56 30 40 32 28 40z" fill="#93604b"/>
<path d="M40 18C46 24 48 34 46 42L36 42C36 32 36 24 40 18z" fill="#b07d66"/>
<rect x="28" y="41" width="32" height="3.6" rx="1.5" fill="#5a3d35"/>
<ellipse cx="48" cy="61" rx="7" ry="3" fill="#d4705f"/>
<ellipse cx="46" cy="98" rx="14" ry="14" fill="#ecd6c8"/>
<ellipse cx="14" cy="82" rx="6" ry="8" fill="#e9d3c0"/>
</g></g></svg>
<div class="b" style="left:907.5px;top:34.3px;width:41px;height:41px;background:#3b875e;border-radius:50%;box-shadow:0 0 0 2px #fff;"></div>
<div class="t" style="left:913.5px;top:44.5px;font-size:21px;color:#d9eee2;">AL</div>
<div class="b" style="left:940.1px;top:34.3px;width:41px;height:41px;background:rgba(0,0,0,.27);border-radius:50%;box-shadow:0 0 0 2px #fff;"></div>
<div class="t" style="left:947.7px;top:42.9px;font-size:24px;color:#ffffff;">+3</div>
<svg class="b" style="left:1816px;top:46px;" width="30" height="18" viewBox="0 0 30 18" fill="none"><path d="M3 12.6H25.5L18.4 5.4" stroke="#b9bbbf" stroke-width="2.2" stroke-linecap="round" stroke-linejoin="round"/></svg>
<svg class="b" style="left:2032px;top:40px;" width="32" height="30" viewBox="0 0 32 30" fill="none"><g stroke="#c2c4c8" stroke-width="2.4" stroke-linejoin="round"><rect x="4" y="6" width="24" height="20.4"/><path d="M4 12.4h24M10.4 2.6v6M21.6 2.6v6"/></g></svg>
<svg class="b" style="left:2549.9px;top:35.3px;" width="40" height="40" viewBox="0 0 40 40" fill="none"><g stroke="#42526e" stroke-width="3.4" stroke-linecap="round" stroke-linejoin="round"><path d="M17.4 5A15.2 15.2 0 1 0 35.2 20"/><path d="M18.4 11.2v9.6h7.2"/></g>
    <g stroke="#42526e" stroke-width="3.6" stroke-linecap="round"><path d="M23.4 5.2l1.2 .4M29.2 8.2l1 1M33.4 13.4l.6 1.4"/></g></svg>
<div class="b" style="left:516px;top:500px;width:80px;height:886px;border:6px solid #e8411f;"></div>
</div></body></html>
